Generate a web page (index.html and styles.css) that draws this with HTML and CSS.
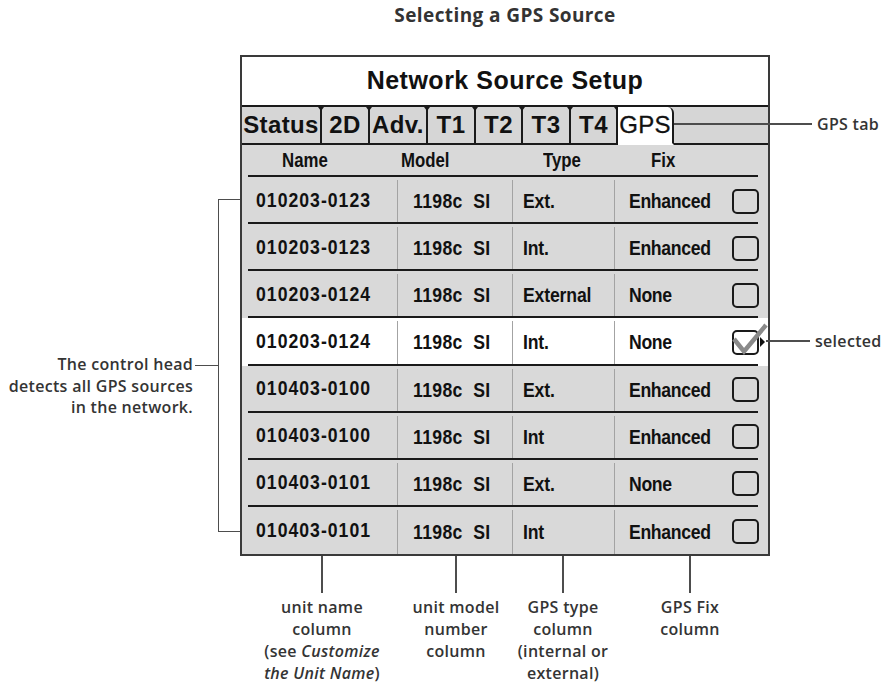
FILE: index.html
```html
<!DOCTYPE html>
<html>
<head>
<meta charset="utf-8">
<title>Selecting a GPS Source</title>
<link rel="stylesheet" href="styles.css">
</head>
<body>
<div class="figure">
  <h1 class="heading">Selecting a GPS Source</h1>

  <div class="left-note">
    <div class="note-text">
      <div class="note-line first">The control head<span class="lead-h"></span></div>
      <div class="note-line">detects all GPS sources</div>
      <div class="note-line">in the network.</div>
    </div>
    <div class="bracket"></div>
  </div>

  <div class="panel">
    <div class="panel-title">Network Source Setup</div>
    <div class="tabs">
      <div class="tab">Status</div>
      <div class="tab">2D</div>
      <div class="tab">Adv.</div>
      <div class="tab">T1</div>
      <div class="tab">T2</div>
      <div class="tab">T3</div>
      <div class="tab">T4</div>
      <div class="tab active">GPS</div>
      <div class="tab-fill"></div>
    </div>
    <div class="table">
      <div class="thead">
        <div class="h h-name"><span class="t">Name</span></div>
        <div class="h h-model"><span class="t">Model</span></div>
        <div class="h h-type"><span class="t">Type</span></div>
        <div class="h h-fix"><span class="t">Fix</span></div>
      </div>
      <div class="rows">
        <div class="row"><div class="cells"><div class="c name"><span class="t">010203-0123</span></div><div class="c model"><span class="t">1198c&nbsp;&nbsp;SI</span></div><div class="c type"><span class="t">Ext.</span></div><div class="c fix"><span class="t">Enhanced</span><span class="box"></span></div></div></div>
        <div class="row"><div class="cells"><div class="c name"><span class="t">010203-0123</span></div><div class="c model"><span class="t">1198c&nbsp;&nbsp;SI</span></div><div class="c type"><span class="t">Int.</span></div><div class="c fix"><span class="t">Enhanced</span><span class="box"></span></div></div></div>
        <div class="row"><div class="cells"><div class="c name"><span class="t">010203-0124</span></div><div class="c model"><span class="t">1198c&nbsp;&nbsp;SI</span></div><div class="c type"><span class="t">External</span></div><div class="c fix"><span class="t">None</span><span class="box"></span></div></div></div>
        <div class="row selected"><div class="cells"><div class="c name"><span class="t">010203-0124</span></div><div class="c model"><span class="t">1198c&nbsp;&nbsp;SI</span></div><div class="c type"><span class="t">Int.</span></div><div class="c fix"><span class="t">None</span><span class="box checked"><svg class="check" viewBox="0 0 40 34" width="40" height="34"><path d="M4 17 L14 29.5 L36 3" fill="none" stroke="#8a8a8a" stroke-width="4.5"/></svg><span class="pointer"></span></span></div></div></div>
        <div class="row"><div class="cells"><div class="c name"><span class="t">010403-0100</span></div><div class="c model"><span class="t">1198c&nbsp;&nbsp;SI</span></div><div class="c type"><span class="t">Ext.</span></div><div class="c fix"><span class="t">Enhanced</span><span class="box"></span></div></div></div>
        <div class="row"><div class="cells"><div class="c name"><span class="t">010403-0100</span></div><div class="c model"><span class="t">1198c&nbsp;&nbsp;SI</span></div><div class="c type"><span class="t">Int</span></div><div class="c fix"><span class="t">Enhanced</span><span class="box"></span></div></div></div>
        <div class="row"><div class="cells"><div class="c name"><span class="t">010403-0101</span></div><div class="c model"><span class="t">1198c&nbsp;&nbsp;SI</span></div><div class="c type"><span class="t">Ext.</span></div><div class="c fix"><span class="t">None</span><span class="box"></span></div></div></div>
        <div class="row last"><div class="cells"><div class="c name"><span class="t">010403-0101</span></div><div class="c model"><span class="t">1198c&nbsp;&nbsp;SI</span></div><div class="c type"><span class="t">Int</span></div><div class="c fix"><span class="t">Enhanced</span><span class="box"></span></div></div></div>
      </div>
    </div>

    <div class="callout callout-tab"><span class="lead-long"></span><span class="callout-label">GPS tab</span></div>
    <div class="callout callout-sel"><span class="lead-short"></span><span class="callout-label">selected</span></div>
  </div>

  <div class="bottom-notes">
    <div class="note"><span class="tick"></span><div class="note-body">unit name<br>column<br>(see <i>Customize</i><br><i>the Unit Name</i>)</div></div>
    <div class="note"><span class="tick"></span><div class="note-body">unit model<br>number<br>column</div></div>
    <div class="note"><span class="tick"></span><div class="note-body">GPS type<br>column<br>(internal or<br>external)</div></div>
    <div class="note"><span class="tick"></span><div class="note-body">GPS Fix<br>column</div></div>
  </div>
</div>
</body>
</html>
```

FILE: styles.css
```css
html, body {
  margin: 0;
  padding: 0;
  background: #ffffff;
}

body {
  font-family: "Open Sans", Roboto, sans-serif;
  color: #343434;
}

.figure {
  width: 893px;
  display: grid;
  grid-template-columns: 240px 530px 123px;
  grid-template-rows: 55px 501px auto;
}

.heading {
  grid-column: 2;
  grid-row: 1;
  margin: 0;
  font-size: 19px;
  font-weight: 700;
  line-height: 30px;
  letter-spacing: 0.4px;
  text-align: center;
  color: #333333;
}

/* left callout */
.left-note {
  grid-column: 1;
  grid-row: 2;
  display: flex;
  justify-content: flex-end;
  align-items: flex-start;
}

.note-text {
  margin-top: 299px;
  text-align: right;
  font-size: 16px;
  font-weight: 600;
  line-height: 21.5px;
  letter-spacing: 0.3px;
}

.note-line {
  padding-right: 25px;
  white-space: nowrap;
}

.note-line.first {
  padding-right: 0;
}

.lead-h {
  display: inline-block;
  width: 23px;
  height: 1.5px;
  margin-left: 2px;
  background: #4d4d4d;
  vertical-align: middle;
}

.bracket {
  margin-top: 144px;
  width: 22px;
  height: 333px;
  box-sizing: border-box;
  border-left: 1.5px solid #4d4d4d;
  border-top: 1.5px solid #4d4d4d;
  border-bottom: 1.5px solid #4d4d4d;
}

/* device panel */
.panel {
  grid-column: 2;
  grid-row: 2;
  position: relative;
  box-sizing: border-box;
  border: 2px solid #3a3a3a;
  background: #d9d9d9;
  display: flex;
  flex-direction: column;
  font-family: "Liberation Sans", Arial, sans-serif;
  color: #111111;
}

.panel-title {
  height: 50px;
  box-sizing: border-box;
  background: #ffffff;
  border-bottom: 2px solid #1a1a1a;
  text-align: center;
  font-size: 25px;
  font-weight: 700;
  line-height: 47px;
  letter-spacing: 0.5px;
}

.tabs {
  height: 37px;
  display: grid;
  grid-template-columns: 80px 48px 58px 48px 47px 48px 47px 56px 1fr;
  background: #d6d6d6;
}

.tab {
  position: relative;
  box-sizing: border-box;
  border-right: 2px solid #1a1a1a;
  border-bottom: 2px solid #1a1a1a;
  text-align: center;
  font-size: 24px;
  font-weight: 700;
  line-height: 36px;
  letter-spacing: 0.4px;
  white-space: nowrap;
}

.tab::after {
  content: "";
  position: absolute;
  top: 0;
  right: -4px;
  width: 0;
  height: 0;
  border-top: 4px solid #1a1a1a;
  border-left: 3px solid transparent;
  border-right: 3px solid transparent;
}

.tab.active {
  background: #ffffff;
  border-bottom-color: #ffffff;
  border-top-right-radius: 6px;
  font-weight: 400;
  letter-spacing: 0.2px;
  -webkit-text-stroke: 0.3px #111111;
}

.tab.active::after {
  display: none;
}

.tab-fill {
  border-bottom: 2px solid #1a1a1a;
}

.table {
  flex: 1;
  display: flex;
  flex-direction: column;
}

.t {
  display: inline-block;
  transform: scaleX(0.84);
  transform-origin: left center;
}

.thead {
  height: 33px;
  box-sizing: border-box;
  margin: 0 10px 0 6px;
  border-bottom: 2px solid #1a1a1a;
  display: grid;
  grid-template-columns: 149px 115px 102px 1fr;
  font-weight: 700;
  font-size: 20px;
  line-height: 33px;
}

.h-name { padding-left: 34px; }
.h-model { padding-left: 4px; }
.h-type { padding-left: 31px; }
.h-fix { padding-left: 37px; }

.rows {
  flex: 1;
  display: grid;
  grid-template-rows: repeat(8, 1fr);
}

.row.selected {
  background: #ffffff;
}

.cells {
  margin: 0 10px 0 6px;
  height: 100%;
  box-sizing: border-box;
  border-bottom: 2px solid #1a1a1a;
  display: grid;
  grid-template-columns: 149px 115px 102px 1fr;
  font-weight: 700;
  font-size: 21px;
}

.row.last .cells {
  border-bottom: none;
}

.c {
  display: flex;
  align-items: center;
  white-space: nowrap;
}

.c + .c {
  border-left: 1px solid #a3a3a3;
  margin-top: 3px;
}

.name {
  padding-left: 8px;
  letter-spacing: 1.2px;
}

.model {
  padding-left: 15px;
  letter-spacing: 0.4px;
}

.type {
  padding-left: 10px;
  letter-spacing: -0.2px;
}

.fix {
  padding-left: 14px;
  justify-content: space-between;
  margin-right: -1px;
  letter-spacing: -0.4px;
}

.box {
  position: relative;
  width: 27px;
  height: 25px;
  box-sizing: border-box;
  border: 2px solid #1a1a1a;
  border-radius: 5px;
}

.check {
  position: absolute;
  left: -4px;
  top: -10px;
}

.pointer {
  position: absolute;
  left: 26px;
  top: 5px;
  width: 0;
  height: 0;
  border-left: 5px solid #111111;
  border-top: 5px solid transparent;
  border-bottom: 5px solid transparent;
}

/* right callouts */
.callout {
  position: absolute;
  display: flex;
  align-items: center;
  gap: 5px;
  font-family: "Open Sans", Roboto, sans-serif;
  font-size: 16px;
  font-weight: 600;
  line-height: 22px;
  letter-spacing: 0.3px;
  color: #343434;
  white-space: nowrap;
}

.callout-tab {
  left: 432px;
  top: 56px;
}

.callout-sel {
  left: 524px;
  top: 273px;
}

.lead-long,
.lead-short {
  display: block;
  height: 1.5px;
  background: #4d4d4d;
}

.lead-long { width: 138px; }
.lead-short { width: 44px; }

/* bottom callouts */
.bottom-notes {
  grid-column: 2;
  grid-row: 3;
  margin-top: -6px;
  padding-left: 8px;
  display: grid;
  grid-template-columns: 148px 120px 94px 160px;
  font-size: 16px;
  font-weight: 600;
  line-height: 22px;
  letter-spacing: 0.3px;
  color: #343434;
}

.note {
  display: flex;
  flex-direction: column;
  align-items: center;
}

.tick {
  display: block;
  width: 1.5px;
  height: 43px;
  background: #4d4d4d;
}

.note-body {
  margin-top: 3px;
  text-align: center;
  white-space: nowrap;
}
```
